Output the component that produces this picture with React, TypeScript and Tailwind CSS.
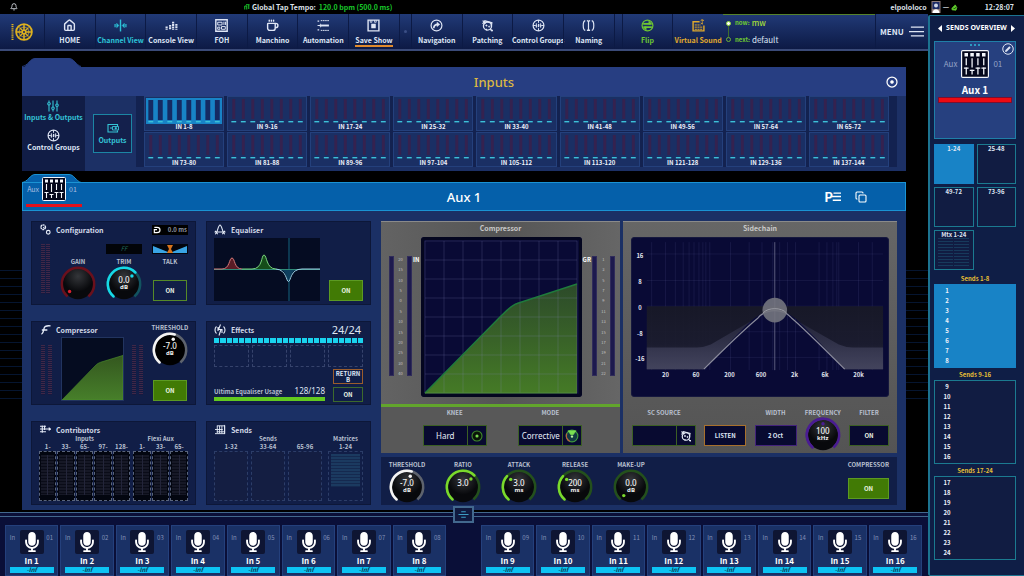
import React from "react";
import { Bell, House, Coffee, Copy } from "lucide-react";
import { FaMicrophone } from "react-icons/fa";

type IconProps = { className?: string };

function Svg({ className = "size-3", box = 24, children }: IconProps & { box?: number; children: React.ReactNode }) {
  return (
    <svg
      viewBox={`0 0 ${box} ${box}`}
      className={className}
      fill="none"
      stroke="currentColor"
      strokeWidth={2.2}
      aria-hidden="true"
    >
      {children}
    </svg>
  );
}

const HomeIcon = () => <House className="size-[13px]" strokeWidth={2.6} aria-hidden="true" />;
const ChannelIcon = () => (
  <Svg className="size-[13px]">
    <path d="M12 1v22" strokeWidth={2.6} />
    <path d="M9 12 5 8v8zM15 12l4-4v8z" fill="currentColor" strokeWidth={1} />
    <path d="M2 9v6M22 9v6" />
  </Svg>
);
const ConsoleIcon = () => (
  <Svg className="size-[13px]">
    <path d="M3 14v6M9.500 11v9M15 5v15M21 9v11" strokeWidth={4} strokeDasharray="3.4 1" />
  </Svg>
);
const FohIcon = () => (
  <Svg className="size-[13px]">
    <path d="M1.500 1.500h21v21h-21z" strokeWidth={2.6} />
    <path d="M5 6h8v5H5zM5 15h4v4H5zM12 14h7v5h-7zM16.500 5v6M19.500 5v6" strokeWidth={1.800} />
  </Svg>
);
const CupIcon = () => <Coffee className="size-[13px]" strokeWidth={2.6} aria-hidden="true" />;
const ListIcon = () => (
  <Svg className="size-[13px]">
    <path d="M1 4h3M1 12h6M1 20h3" />
    <path d="M7 3h16M7 21h16" strokeWidth={1.800} strokeDasharray="3 1" />
    <path d="M9 12h13" strokeWidth={3.5} />
    <path d="m6 9 4 3-4 3z" fill="currentColor" strokeWidth={1} />
  </Svg>
);
const SaveIcon = () => (
  <Svg className="size-[13px]">
    <path d="M2 2h20v20H2z" strokeWidth={2.6} />
    <path d="M6 2v4h3V2M14 2v4h3V2" strokeWidth={1.500} />
    <path d="M9 10h6v6H9z" fill="currentColor" />
  </Svg>
);
const NavigateIcon = () => (
  <Svg className="size-[13px]">
    <circle cx="12" cy="12" r="10" />
    <path d="M7 17c0-5 3-7 8-7" strokeWidth={3} />
    <path d="m13 6 5 4-5 4z" fill="currentColor" strokeWidth={1} />
  </Svg>
);
const PatchIcon = ({ className = "size-[13px]" }: IconProps) => (
  <Svg className={className}>
    <circle cx="12" cy="13" r="7.500" strokeWidth={2.4} />
    <path d="M3 3l6 5M3 9l4-5M21 23l-4-5M6 3l14 4-1 6" strokeWidth={2.4} />
    <circle cx="10" cy="12" r="1.300" fill="currentColor" strokeWidth={1} />
    <circle cx="15" cy="14" r="1.300" fill="currentColor" strokeWidth={1} />
    <path d="M10 18v3M18 21h4" />
  </Svg>
);
const GroupIcon = () => (
  <Svg className="size-[13px]">
    <circle cx="12" cy="12" r="10" />
    <path d="M12 2v5M2 12h5M17 12h5M12 17v5M8 8v8M12 9v6M16 8v8M7 13h3M11 11h3M14 13h3" strokeWidth={1.800} />
  </Svg>
);
const NamingIcon = () => (
  <Svg className="size-[13px]">
    <path d="M6 3C1 4 1 20 6 21M18 3c5 1 5 17 0 18M12 4v16M9 3c2 0 3 1 3 2 0-1 1-2 3-2M9 21c2 0 3-1 3-2 0 1 1 2 3 2" />
  </Svg>
);
const FlipIcon = () => (
  <Svg className="size-[13px]">
    <circle cx="12" cy="12" r="10" />
    <path d="M4 9h14M20 15H6" strokeWidth={3} />
    <path d="m15 5 4 4h-4zM9 19l-4-4h4z" fill="currentColor" />
  </Svg>
);
const VirtualIcon = () => (
  <Svg className="size-[13px]">
    <path d="M14 5H2v17h20V12" strokeWidth={2.600} />
    <path d="M19 1v9l-3-3M16 3l3-2 3 2M5 11h11M5 15h14M5 19h14" strokeWidth={1.800} strokeDasharray="4 1" />
  </Svg>
);
const FadersIcon = ({ className = "size-3" }: IconProps) => (
  <Svg className={className}>
    <path d="M4 1v4M4 10v13M12 1v13M12 19v4M20 1v7M20 13v10" />
    <circle cx="4" cy="7.500" r="2.500" />
    <circle cx="12" cy="16.500" r="2.500" />
    <circle cx="20" cy="10.500" r="2.500" />
  </Svg>
);
const OutputIcon = () => (
  <Svg className="size-3">
    <path d="M21 8V5H2v15h19v-3M6 12h5" />
    <path d="M11 9h12v7H11z" strokeWidth={1.800} />
    <path d="M16 11h3v3h-3z" fill="currentColor" strokeWidth={1} />
  </Svg>
);

function AuxIcon({ className = "size-6" }: IconProps) {
  return (
    <svg viewBox="0 0 24 24" className={className} fill="none" stroke="#f4f6fc" aria-hidden="true">
      <rect x="0.500" y="0.500" width="23" height="23" rx="1" fill="#04071c" strokeWidth="1" />
      <path d="M3 4h3M8 4h3M13 4h3M18 4h3" strokeWidth="3" />
      <path d="M4.500 7v6M9.500 7v8M14.500 7v6M19.500 7v6M4.500 15v6M9.500 17v4M14.500 15v6M19.500 15v6" strokeWidth="1.100" />
      <path d="M2.500 15.500h4M7.500 17.500h4M12.500 15.500h4M17.500 15.500h4" strokeWidth="1.100" />
    </svg>
  );
}

const NAV_A = [
  { label: "HOME", icon: <HomeIcon />, tone: "text-[#dfe6f5]", mark: false },
  { label: "Channel View", icon: <ChannelIcon />, tone: "text-[#2cc3d8]", mark: false },
  { label: "Console View", icon: <ConsoleIcon />, tone: "text-[#dfe6f5]", mark: false },
  { label: "FOH", icon: <FohIcon />, tone: "text-[#dfe6f5]", mark: false },
  { label: "Manchino", icon: <CupIcon />, tone: "text-[#dfe6f5]", mark: false },
  { label: "Automation", icon: <ListIcon />, tone: "text-[#dfe6f5]", mark: false },
  { label: "Save Show", icon: <SaveIcon />, tone: "text-[#dfe6f5]", mark: true },
];
const NAV_B = [
  { label: "Navigation", icon: <NavigateIcon />, tone: "text-[#dfe6f5]", mark: false },
  { label: "Patching", icon: <PatchIcon />, tone: "text-[#dfe6f5]", mark: false },
  { label: "Control Groups", icon: <GroupIcon />, tone: "text-[#dfe6f5]", mark: false },
  { label: "Naming", icon: <NamingIcon />, tone: "text-[#dfe6f5]", mark: false },
];
const NAV_C = [
  { label: "Flip", icon: <FlipIcon />, tone: "text-[#6fc832]", mark: false },
  { label: "Virtual Sound", icon: <VirtualIcon />, tone: "text-[#e0a92c]", mark: false },
];

function NavItem({ item }: { item: (typeof NAV_A)[number] }) {
  return (
    <button
      className={`flex flex-col items-center gap-[3px] border-l border-[#0c1a45] pt-[5px] text-[7px] leading-[10px] font-bold whitespace-nowrap ${item.tone}`}
    >
      {item.icon}
      <span className={item.mark ? "border-b-2 border-[#e08a2c]" : ""}>{item.label}</span>
    </button>
  );
}

function StatusBar() {
  return (
    <div className="flex h-[14px] items-center bg-black text-[7px] leading-[10px] font-bold text-[#dfe3ea]">
      <div className="w-[244px] pl-[10px]">
        <Bell className="size-2" strokeWidth={2.500} aria-label="Notifications" />
      </div>
      <div className="flex flex-1 items-center gap-[2px]">
        <Svg className="size-[6px] text-[#19c92a]">
          <path d="M3 22V8h8v14M8 3h14M19 3v17" strokeWidth={4} />
        </Svg>
        <span>Global Tap Tempo:</span>
        <span className="pl-px text-[#19c92a]">120.0 bpm (500.0 ms)</span>
      </div>
      <span className="pr-1">elpololoco</span>
      <svg viewBox="0 0 9 12" className="h-3 w-[10px]" aria-hidden="true">
        <rect width="9" height="12" fill="#8d7a78" />
        <rect x="1" y="1" width="7" height="7" fill="#1c2a66" />
        <circle cx="4.500" cy="4.500" r="2" fill="#cfd6e8" />
        <path d="M1 12c0-5 7-5 7 0z" fill="#fff" />
      </svg>
      <span className="px-[2px]">—</span>
      <Svg className="size-[7px] text-[#5fce2c]">
        <path d="M4 20C0 12 10 10 14 3l6 8-3 10z" fill="currentColor" strokeWidth={3} />
        <path d="m8 13 4 4 7-8" stroke="#000" />
      </Svg>
      <span className="w-[66px] pr-[10px] text-right">12:28:07</span>
    </div>
  );
}

function NavBar() {
  return (
    <nav className="grid h-[37px] grid-cols-[44px_repeat(7,minmax(0,1fr))_12px_repeat(4,minmax(0,1fr))_8px_repeat(2,minmax(0,1fr))_205px] border-b-2 border-[#3a4a78] bg-gradient-to-b from-[#213a77] to-[#0d1a45]">
      <div className="flex items-center gap-px pl-[11px] text-[#dfb21f]">
        <svg viewBox="0 0 3 18" className="h-[18px] w-[3px]" fill="none" stroke="currentColor" aria-hidden="true">
          <path d="M1.500 1v16" strokeWidth="2" strokeDasharray="1.200 0.900" />
        </svg>
        <Svg className="size-[18px]">
          <circle cx="12" cy="12" r="10.500" strokeWidth={2.400} />
          <circle cx="12" cy="12" r="2.500" />
          <path d="M12 2v7M12 15v7M2 12h7M15 12h7" strokeWidth={2} />
          <path d="m6 6 3.500 3.500M18 6l-3.500 3.500M6 18l3.500-3.500M18 18l-3.500-3.500" strokeWidth={1.500} />
          <circle cx="12" cy="12" r="6.500" strokeWidth={1} />
        </Svg>
      </div>
      {NAV_A.map((i) => <NavItem key={i.label} item={i} />)}
      <div className="grid place-items-center border-l border-[#0c1a45]">
        <i className="size-[3px] rounded-full bg-[#3b4f86]" />
      </div>
      {NAV_B.map((i) => <NavItem key={i.label} item={i} />)}
      <div className="border-l border-[#0c1a45]" />
      {NAV_C.map((i) => <NavItem key={i.label} item={i} />)}
      <div className="flex">
        <div className="flex flex-1 items-stretch gap-1 border-t border-[#56832c] pl-[3px]">
          <div className="flex flex-col items-center pt-[6px] pb-[7px]">
            <i className="size-[5px] rounded-full border border-[#8fd636] bg-white" />
            <i className="w-px flex-1 bg-[#3f6d2c]" />
            <i className="size-[5px] rounded-full border border-[#6fae36]" />
          </div>
          <div className="flex flex-col justify-between pt-[2px] pb-1 text-[8px] leading-[11px] text-[#dfe6f5]">
            <div className="flex gap-[2px]"><b className="text-[6px] text-[#6fc832]">now:</b> <span className="font-medium text-[#a5de3a]">mw</span></div>
            <div className="flex gap-[2px]"><b className="text-[6px] text-[#6fc832]">next:</b> default</div>
          </div>
        </div>
        <button className="flex w-[53px] items-center gap-[5px] border-l border-[#0c1a45] pl-1 text-[8px] font-bold text-[#dfe6f5]">
          MENU
          <Svg className="size-[15px]"><path d="M3 5h21M0 12h24M3 19h21" strokeWidth={2} /></Svg>
        </button>
      </div>
    </nav>
  );
}

const BANKS = [
  "1-8", "9-16", "17-24", "25-32", "33-40", "41-48", "49-56", "57-64", "65-72",
  "73-80", "81-88", "89-96", "97-104", "105-112", "113-120", "121-128", "129-136", "137-144",
];

function Bank({ label, active }: { label: string; active: boolean }) {
  return (
    <button className="flex h-[35px] flex-col border border-[#24407c] bg-[#1a2f64] px-px pt-px">
      <svg viewBox="0 0 78 26" preserveAspectRatio="none" className="block h-[26px] w-full" aria-hidden="true">
        {active && <path d="M0 0h78v26H0z" fill="#1883c6" />}
        {Array.from({ length: 8 }, (_, i) => {
          const x = 4.9 + i * 9.74;
          return (
            <g key={i}>
              {active ? (
                <rect x={x - 2.500} y="2" width="5" height="20" fill="#152a62" />
              ) : (
                <rect x={x - 1.500} y="1" width="3" height="20" fill="#35224f" />
              )}
              <rect x={x - 2.500} y="23" width="5" height="1.400" fill="#3cc0d8" />
            </g>
          );
        })}
      </svg>
      <span className="w-full text-center text-[6px] leading-[6px] font-bold text-[#eef2fb]">IN {label}</span>
    </button>
  );
}

function Tab({ fill, stroke, className = "" }: { fill: string; stroke: string; className?: string }) {
  return (
    <svg viewBox="0 0 60 9" className={`block h-[9px] w-[60px] ${className}`} aria-hidden="true">
      <path d="M2 9 C6 7 8 .5 13 .5H47C52 .5 54 7 59 9z" fill={fill} />
      <path d="M0 8.500C6 8 8 .5 13 .5H47C52 .5 54 7 59 8.500" fill="none" stroke={stroke} />
    </svg>
  );
}

function InputsPanel() {
  return (
    <section className="pt-[7px]">
      <Tab fill="#273e82" stroke="#273e82" />
      <header className="grid h-[29px] grid-cols-[1fr_auto_1fr] items-center bg-[#273e82]">
        <span />
        <h2 className="pl-[60px] font-['Noto_Sans',sans-serif] text-[13px] leading-[18px] font-medium text-[#dcb842]">Inputs</h2>
        <button aria-label="Inputs settings" className="justify-self-end pr-2 text-white">
          <Svg className="size-3">
            <circle cx="12" cy="12" r="10" strokeWidth={2.500} />
            <circle cx="12" cy="12" r="2.500" fill="currentColor" />
          </Svg>
        </button>
      </header>
      <div className="flex h-[75px] bg-[#1c3065]">
        <div className="flex w-[63px] flex-col items-center gap-[7px] bg-[#111d46] pt-1 text-[7px] leading-[9px] font-bold whitespace-nowrap">
          <button className="flex flex-col items-center gap-px text-[#35c4d6]">
            <FadersIcon />
            Inputs &amp; Outputs
          </button>
          <button className="flex flex-col items-center gap-px text-[#dfe6f5]">
            <GroupIcon />
            Control Groups
          </button>
        </div>
        <div className="grid w-[51px] place-items-center pl-1">
          <button className="flex h-[39px] w-[39px] flex-col items-center justify-center gap-px border border-[#1c86a4] bg-[#14204c] text-[7px] leading-[10px] font-bold text-[#35c4d6]">
            <OutputIcon />
            Outputs
          </button>
        </div>
        <div className="mr-[9px] mb-1 grid flex-1 grid-cols-9 content-start gap-x-[3px] gap-y-px bg-[#132250] pr-2 pl-2">
          {BANKS.map((b, i) => <Bank key={b} label={b} active={i === 0} />)}
        </div>
      </div>
    </section>
  );
}

function polar(deg: number, r: number) {
  const a = ((deg - 90) * Math.PI) / 180;
  return [20 + r * Math.cos(a), 20 + r * Math.sin(a)];
}
function arc(from: number, to: number, r: number) {
  const [x1, y1] = polar(from, r);
  const [x2, y2] = polar(to, r);
  return `M${x1} ${y1}A${r} ${r} 0 ${to - from > 180 ? 1 : 0} 1 ${x2} ${y2}`;
}

function Knob({ name, value, unit, level, color, track }: {
  name: string; value: string; unit: string; level: number; color: string; track: string;
}) {
  const start = -140;
  const end = 140;
  const at = start + (end - start) * level;
  const [dx, dy] = polar(at, 12.500);
  return (
    <div
      role="slider"
      aria-label={name}
      aria-valuenow={Math.round(level * 100)}
      tabIndex={0}
      className="grid size-9 place-items-center"
    >
      <svg viewBox="0 0 40 40" className="col-start-1 row-start-1 size-9" aria-hidden="true">
        <defs>
          <radialGradient id={`face-${name}`} cy="0.250">
            <stop offset="0" stopColor="#34363a" />
            <stop offset="1" stopColor="#08090c" />
          </radialGradient>
        </defs>
        <circle cx="20" cy="20" r="17" fill={`url(#face-${name})`} />
        <path d={arc(start, end, 18)} fill="none" stroke={track} strokeWidth="2.800" />
        {level > 0.1 && <path d={arc(start, at, 18)} fill="none" stroke={color} strokeWidth="2.800" strokeLinecap="round" />}
        <circle cx={dx} cy={dy} r="1.900" fill={color} />
      </svg>
      {value && (
        <div className="col-start-1 row-start-1 pb-px text-center font-['Noto_Sans',sans-serif] text-[8px] leading-[8px] font-medium text-[#f2f2f2]">
          {value}
          <div className="h-[7px] text-[6px] leading-[7px] font-bold">{unit}</div>
        </div>
      )}
    </div>
  );
}

function Label({ children }: { children: React.ReactNode }) {
  return <div className="text-center text-[6px] leading-[8px] font-bold whitespace-nowrap text-[#b9c0d0]">{children}</div>;
}

function Card({ title, icon, right, children }: {
  title: string; icon: React.ReactNode; right?: React.ReactNode; children: React.ReactNode;
}) {
  return (
    <article className="flex h-[84px] flex-col border border-[#0d1738] bg-[#111e47] px-[7px]">
      <header className="flex h-[15px] shrink-0 items-center">
        <span className="flex w-[17px] text-[#e6ecf8]">{icon}</span>
        <h3 className="flex-1 text-[7px] leading-[10px] font-bold text-[#d3d9e8]">{title}</h3>
        {right}
      </header>
      {children}
    </article>
  );
}

function DotMeter() {
  return (
    <div className="flex h-[50px] w-[11px] justify-between">
      <i className="w-1 bg-[repeating-linear-gradient(#3f2848_0_1px,#15193f_1px_2px)]" />
      <i className="w-1 bg-[repeating-linear-gradient(#3f2848_0_1px,#15193f_1px_2px)]" />
    </div>
  );
}

const OnButton = ({ className }: { className: string }) => (
  <button className={`grid place-items-center text-[6px] leading-[8px] font-bold text-[#eef5e6] ${className}`}>ON</button>
);
const SOLID = "h-[21px] w-[34px] border border-[#5c9a22] bg-[#417a05]";

function ConfigurationCard() {
  return (
    <Card
      title="Configuration"
      icon={
        <Svg className="ml-px size-[11px]">
          <circle cx="7" cy="7" r="5" strokeDasharray="4 1" strokeWidth={3} />
          <circle cx="18" cy="18" r="4" strokeWidth={2.500} />
          <path d="M7 7l3 3" />
        </Svg>
      }
      right={
        <div className="flex h-[10px] w-9 items-center justify-between bg-black px-px text-[6px] font-bold text-[#8f96a3]">
          <Svg className="size-2 text-white"><path d="M4 4h8c12 0 12 16 0 16H4v-9h8" strokeWidth={3.500} /></Svg>
          0.0 ms
        </div>
      }
    >
      <div className="flex items-start pt-[7px] pl-[2px]">
        <DotMeter />
        <div className="ml-[10px] flex w-9 flex-col pt-[14px]">
          <Label>GAIN</Label>
          <Knob name="Gain" value="" unit="" level={0.030} color="#d82030" track="#6a101c" />
        </div>
        <div className="ml-[10px] flex w-9 flex-col">
          <div className="mb-1 grid h-[10px] place-items-center bg-[#020408] text-[6px] leading-none italic text-[#1f6a5c]">FF</div>
          <Label>TRIM</Label>
          <Knob name="Trim" value="0.0" unit="dB" level={0.660} color="#16d8e6" track="#12535f" />
        </div>
        <div className="ml-[10px] flex w-9 flex-col items-center">
          <svg viewBox="0 0 36 10" className="mb-1 block h-[10px] w-9" aria-hidden="true">
            <path d="M0 0h36v10H0z" fill="#03060d" />
            <path d="M1 2 16 8v1H1zM35 2 20 8v1h15z" fill="#39a4e4" />
            <path d="M15 1h6l-2 4 2 4h-6l2-4z" fill="#d8741c" />
          </svg>
          <Label>TALK</Label>
          <OnButton className="mt-[14px] h-[21px] w-[34px] border border-[#568a28]" />
        </div>
      </div>
    </Card>
  );
}

function EqualiserCard() {
  return (
    <Card
      title="Equaliser"
      icon={<Svg className="size-3"><path d="M1 16h22M2 20c5 0 6-18 10-18s5 18 10 18M2 14c3 0 3 6 6 6M22 14c-3 0-3 6-6 6" /></Svg>}
    >
      <div className="flex flex-1 items-end justify-between pb-[3px]">
        <svg viewBox="0 0 106 63" className="h-[63px] w-[106px] bg-[#050c22]" fill="none" aria-label="Equaliser curve">
          <path d="M75 0v63" stroke="#12506a" strokeWidth="1.300" />
          <path d="M8 31C16 31 15 20 18 20S20 31 28 31z" fill="#5a1c26" />
          <path d="M38 31C49 31 47 17 50 17S52 31 62 31z" fill="#154d1a" />
          <path d="M64 31C74 32 72 43 74.500 43S75 32 86 31z" fill="#0d3f5e" />
          <path d="M0 31.500H106" stroke="#2f8a78" strokeWidth="1" />
          <path d="M0 31H8C16 31 15 20 18 20S20 31 28 31" stroke="#d77a7a" />
          <path d="M28 31H38C49 31 47 17 50 17S52 31 62 31" stroke="#7ad47e" />
          <path d="M62 31C73 32 72 43.500 74.500 43.500S76 31 88 31H106" stroke="#9cd0e4" />
        </svg>
        <OnButton className={SOLID} />
      </div>
    </Card>
  );
}

function CompressorCard() {
  return (
    <Card title="Compressor" icon={<Svg className="ml-px size-[11px]"><path d="M3 22C7 21 8 14 9 9c1-4 5-6 14-5M4 13h12" strokeWidth={3} /></Svg>}>
      <div className="flex flex-1 items-start justify-between pl-[2px]">
        <div className="pt-2"><DotMeter /></div>
        <svg viewBox="0 0 63 64" className="h-16 w-[63px] border border-[#22345f] bg-[#050c20]" aria-label="Compressor curve">
          <defs>
            <linearGradient id="mini" x2="0" y2="1">
              <stop stopColor="#34571f" />
              <stop offset="1" stopColor="#477f2a" />
            </linearGradient>
          </defs>
          <path d="M0 64 35 28Q37 26 40 25L63 18V64z" fill="url(#mini)" stroke="#4c8f2a" strokeWidth="0.700" />
        </svg>
        <div className="pt-2"><DotMeter /></div>
        <div className="-mt-[13px] flex w-9 flex-col items-center">
          <Label>THRESHOLD</Label>
          <Knob name="Threshold level" value="-7.0" unit="dB" level={0.560} color="#f4f4f4" track="#5e636d" />
          <OnButton className={`mt-3 ${SOLID}`} />
        </div>
      </div>
    </Card>
  );
}

function EffectsCard() {
  return (
    <Card
      title="Effects"
      icon={<Svg className="size-3"><path d="M5 5C1 8 1 16 5 19M19 5c4 3 4 11 0 14M13 1 9 11h5l-4 12M8 6v8M16 10v8" /></Svg>}
      right={<span className="pr-[2px] font-['Noto_Sans',sans-serif] text-[11px] leading-[12px] text-[#dfe5f2]">24/24</span>}
    >
      <div className="mt-px flex h-[5px] gap-px">
        {Array.from({ length: 24 }, (_, i) => <i key={i} className="flex-1 bg-[#19d3ee]" />)}
      </div>
      <div className="mt-[2px] flex h-[22px] justify-between">
        {[0, 1, 2, 3].map((i) => <i key={i} className="w-[35px] border border-dashed border-[#36436c]" />)}
      </div>
      <div className="mt-[2px] flex flex-1 justify-between">
        <div className="mt-4 w-[111px]">
          <div className="flex h-[12px] items-center justify-between whitespace-nowrap">
            <span className="text-[6px] font-bold text-[#b9c0d0]">Ultima Equaliser Usage</span>
            <span className="font-['Noto_Sans',sans-serif] text-[8px] text-[#dfe5f2]">128/128</span>
          </div>
          <div className="h-1 bg-[#62c91f]" />
        </div>
        <div className="flex w-[30px] flex-col gap-[3px]">
          <button className="h-[15px] border border-[#9a5c2c] text-[6px] leading-[6px] font-bold text-[#dfe6f5]">RETURN<br />B</button>
          <OnButton className="h-[15px] border border-[#3d6a2c]" />
        </div>
      </div>
    </Card>
  );
}

function Matrix({ ranges, dark }: { ranges: string[]; dark: boolean }) {
  return (
    <div className={`flex ${dark ? "gap-px" : "gap-[3px]"}`}>
      {ranges.map((r) => (
        <div key={r} className="flex-1">
          <Label>{r}</Label>
          <div
            className={`flex h-[50px] border border-dashed ${
              dark ? "border-[#59647c] bg-[#030610] p-px" : "border-[#2c3d68] bg-[#141e42]"
            }`}
          >
            {dark && (
              <>
                <i className="mt-[2px] mb-1 flex-1 border-r border-[#23253a] bg-[repeating-linear-gradient(#161826_0_2px,#0a0c18_2px_3px)]" />
                <i className="mt-[2px] mb-1 flex-1 bg-[repeating-linear-gradient(#161826_0_2px,#0a0c18_2px_3px)]" />
              </>
            )}
          </div>
        </div>
      ))}
    </div>
  );
}

function ContributorsCard() {
  return (
    <Card title="Contributors" icon={<Svg className="ml-px size-[11px]"><path d="M0 5h13M0 11h23M0 17h13M5 3v16M10 3v10M19 8l4 3-4 3" strokeWidth={2.400} /></Svg>}>
      <div className="-mt-[2px] flex gap-[3px]">
        <div className="flex-[5]"><Label>Inputs</Label><Matrix dark ranges={["1-", "33-", "65-", "97-", "128-"]} /></div>
        <div className="flex-[3]"><Label>Flexi Aux</Label><Matrix dark ranges={["1-", "33-", "65-"]} /></div>
      </div>
    </Card>
  );
}

function SendsCard() {
  return (
    <Card title="Sends" icon={<Svg className="ml-px size-[11px]"><path d="M0 12h17M4 4h17v17H0M21 2v20M4 17h17M5 4v16M10 4v16M15 4v16" strokeWidth={2} /></Svg>}>
      <div className="-mt-[2px] flex gap-[6px]">
        <div className="flex-[108]"><Label>Sends</Label><Matrix dark={false} ranges={["1-32", "33-64", "65-96"]} /></div>
        <div className="flex-[35]">
          <Label>Matrices</Label>
          <Label>1-24</Label>
          <div className="h-[50px] border border-dashed border-[#2c3d68] p-[2px]">
            <div className="h-[33px] bg-[repeating-linear-gradient(#1b3a60_0_2px,#15294f_2px_3px)]" />
          </div>
        </div>
      </div>
    </Card>
  );
}

function Meter({ marks }: { marks: string[] }) {
  return (
    <div className="flex h-[120px] w-[23px] justify-between">
      <i className="w-[5px] border border-[#302c5a] bg-[#1d1a4e]" />
      <div className="flex flex-col justify-between text-center text-[4px] leading-[6px] text-[#c3c3c3]">
        {marks.map((m, i) => <span key={i}>{m}</span>)}
      </div>
      <i className="w-[5px] border border-[#302c5a] bg-[#1d1a4e]" />
    </div>
  );
}

const GRID_LINES = [4, 23, 42, 61, 80, 99, 118, 137, 156];

function SelectBox({ label, text, children }: { label: string; text: string; children: React.ReactNode }) {
  return (
    <div className="flex flex-col items-center gap-2">
      <Label>{label}</Label>
      <button aria-label={`${label} ${text}`} className="flex h-[21px] w-16 border border-[#3c5f24] bg-[#080a30] font-['Noto_Sans',sans-serif] text-[8px] text-[#e6ecf8]">
        <span className="grid h-full flex-1 place-items-center">{text}</span>
        <span className="grid h-full w-[19px] place-items-center border-l border-[#3c5f24]">{children}</span>
      </button>
    </div>
  );
}

function CompressorGraph() {
  return (
    <div className="flex w-[239px] flex-col">
      <div className="flex h-[183px] flex-col items-center border-t border-[#8a8a8a] bg-gradient-to-r from-[#636363] via-[#555] to-[#666]">
        <h3 className="h-[15px] pt-px text-[7px] leading-[10px] font-bold text-[#c8c8c8]">Compressor</h3>
        <div className="flex w-full justify-between pr-[5px] pl-2">
          <div className="flex gap-px pt-[19px]">
            <Meter marks={["20", "15", "10", "5", "0", "5", "10", "15", "20", "25", "30", "40"]} />
            <span className="text-[6px] leading-[8px] font-bold text-white">IN</span>
          </div>
          <svg viewBox="0 0 161 160" className="h-40 w-[161px] rounded-[3px] bg-[#090a35]" fill="none" aria-label="Compression curve">
            <defs>
              <linearGradient id="comp" x2="0" y2="1">
                <stop stopColor="#2c4a2a" />
                <stop offset="1" stopColor="#457a26" />
              </linearGradient>
            </defs>
            <rect x="1.500" y="1.500" width="158" height="157" rx="2" stroke="#04061f" strokeWidth="3" />
            <path d="M4 156 80 79Q91 68 96 66.500L156 47V156z" fill="url(#comp)" />
            {GRID_LINES.map((p) => (
              <path key={p} d={`M${p} 4V156M4 ${p}H156`} stroke="#8a90c8" strokeOpacity="0.200" />
            ))}
            <path d="M4 156 80 79Q91 68 96 66.500L156 47" stroke="#1f7a3c" strokeWidth="1.500" />
            <path d="M4 156H156" stroke="#4b8a2c" />
          </svg>
          <div className="flex gap-px pt-[19px]">
            <span className="text-[6px] leading-[8px] font-bold text-white">GR</span>
            <Meter marks={["1", "3", "5", "7", "9", "11", "13", "15", "17", "19", "21", "22"]} />
          </div>
        </div>
      </div>
      <div className="grid flex-1 grid-cols-[26px_1fr_1fr_22px] border-t-[3px] border-[#62a52c] bg-[#585858] pt-[2px]">
        <span />
        <SelectBox label="KNEE" text="Hard">
          <Svg className="size-3 text-[#3f8a2c]">
            <circle cx="12" cy="12" r="10" fill="#0a1408" />
            <circle cx="12" cy="12" r="2" fill="#7ae052" stroke="#7ae052" />
          </Svg>
        </SelectBox>
        <SelectBox label="MODE" text="Corrective">
          <Svg className="size-[14px] text-[#3f9a3c]">
            <circle cx="12" cy="12" r="10" fill="#123a44" strokeWidth={2} />
            <path d="M5 3h14l-5 7h-4z" fill="#7ae052" stroke="#7ae052" strokeWidth={1} />
            <path d="M3 8c-2 6 1 11 5 13" stroke="#c05a3c" />
            <circle cx="12" cy="13" r="2" fill="#b9f0a0" stroke="none" />
          </Svg>
        </SelectBox>
      </div>
    </div>
  );
}

const FREQ_LINES = [20, 34, 44, 52, 58, 63, 68, 72, 75, 79, 100, 119, 132, 143, 145, 150, 158, 166, 190, 198, 204, 208, 210, 230, 244];
const DB = [["16", 19], ["8", 46], ["0", 72], ["-8", 98], ["-16", 124]] as const;
const HZ = [["20", 34], ["60", 65], ["200", 99], ["600", 131], ["2k", 165], ["6k", 196], ["20k", 230]] as const;

function SidechainPanel() {
  return (
    <div className="flex flex-1 flex-col border-t border-[#8a8a8a] bg-gradient-to-b from-[#666] to-[#545454] px-2">
      <h3 className="h-[15px] pt-px text-center text-[7px] leading-[10px] font-bold text-[#c8c8c8]">Sidechain</h3>
      <svg viewBox="0 0 260 160" className="h-40 w-full rounded-[3px] border border-[#16183e] bg-[#090a35]" fill="none" aria-label="Sidechain filter response">
        <defs>
          <linearGradient id="shade" x2="0" y2="1">
            <stop stopColor="#181926" />
            <stop offset="0.600" stopColor="#1c1d2e" />
            <stop offset="1" stopColor="#303146" />
          </linearGradient>
          <linearGradient id="edge" x2="0" y2="1">
            <stop stopColor="#30314a" stopOpacity="0.500" />
            <stop offset="1" stopColor="#42435c" />
          </linearGradient>
        </defs>
        {FREQ_LINES.map((x) => <path key={x} d={`M${x} 4V134`} stroke="#8a90d8" strokeOpacity="0.110" />)}
        {DB.map(([t, y]) => <path key={t} d={`M15 ${y - 3}H255`} stroke="#8a90d8" strokeOpacity="0.100" />)}
        <path d="M15 69H255V133H216C190 108 168 73 145 73S100 108 73 133H15z" fill="url(#shade)" fillOpacity="0.920" />
        <path d="M73 133C92 114 108 96 121 84L80 108Q73 111 66 111H15V133zM216 133C200 116 182 96 168 84L210 108Q217 111 224 111H255V133z" fill="url(#edge)" />
        <path d="M145 4V134" stroke="#747690" strokeOpacity="0.700" />
        <path d="M73 133C92 114 116 91 128 81 136 71 154 71 162 81 174 91 197 114 216 133" stroke="#8b8c9c" strokeWidth="1.200" />
        <circle cx="145" cy="73" r="12.500" fill="#73747e" fillOpacity="0.900" />
        <path d="M133 76C138 70 152 70 157 76" stroke="#9a9ba4" />
        <g fill="#e0e3ee" fontSize="6" fontWeight="700" textAnchor="middle">
          {DB.map(([t, y]) => <text key={t} x="8" y={y + 1}>{t}</text>)}
          {HZ.map(([t, x]) => <text key={t} x={x} y="141">{t}</text>)}
        </g>
      </svg>
      <div className="flex justify-between pt-3 pl-px">
        <SelectBox label="SC SOURCE" text=""><PatchIcon className="size-3" /></SelectBox>
        <button className="mt-4 h-[21px] w-[42px] border border-[#a8702c] bg-[#080a30] text-[6px] font-bold text-[#dfe6f5]">LISTEN</button>
        <div className="flex flex-col items-center gap-2">
          <Label>WIDTH</Label>
          <button className="h-[21px] w-[42px] border border-[#43237c] bg-[#080a30] text-[6px] font-bold text-[#dfe6f5]">2 Oct</button>
        </div>
        <div className="flex w-9 flex-col items-center">
          <Label>FREQUENCY</Label>
          <Knob name="Frequency" value="100" unit="kHz" level={0.500} color="#4a1c92" track="#4a1c92" />
        </div>
        <div className="flex flex-col items-center gap-2">
          <Label>FILTER</Label>
          <OnButton className="h-[21px] w-10 border border-[#3c5f24] bg-[#080a30]" />
        </div>
      </div>
    </div>
  );
}

const KNOBS = [
  { name: "THRESHOLD", value: "-7.0", unit: "dB", level: 0.560, color: "#f4f4f4", track: "#5e636d" },
  { name: "RATIO", value: "3.0", unit: "", level: 0.660, color: "#7ad92c", track: "#24501c" },
  { name: "ATTACK", value: "3.0", unit: "ms", level: 0.330, color: "#7ad92c", track: "#24501c" },
  { name: "RELEASE", value: "200", unit: "ms", level: 0.330, color: "#7ad92c", track: "#24501c" },
  { name: "MAKE-UP", value: "0.0", unit: "dB", level: 0, color: "#7ad92c", track: "#24501c" },
];

function AuxPanel() {
  return (
    <section className="pt-[3px]">
      <header className="grid h-[37px] grid-cols-[1fr_auto_1fr]">
        <div className="flex flex-col">
          <Tab fill="#0560aa" stroke="#1a93d4" />
          <div className="-mt-px flex-1 border border-r-0 border-[#1a93d4] bg-[#0560aa]">
            <div className="-mt-[6px] flex w-[59px] flex-col gap-[3px] pl-[3px]">
              <div className="flex items-center justify-center gap-[3px] pr-1 text-[7px] text-[#a9bfe0]">
                Aux <AuxIcon className="size-6" /> 01
              </div>
              <div className="h-[3px] bg-[#e3101c]" />
            </div>
          </div>
        </div>
        <h2 className="mt-2 grid place-items-center border-y border-[#1a93d4] bg-[#0560aa] font-['Noto_Sans',sans-serif] text-[13px] leading-[18px] font-medium text-white">Aux 1</h2>
        <div className="mt-2 flex items-center justify-end gap-[14px] border border-l-0 border-[#1a93d4] bg-[#0560aa] pr-[38px] text-white">
          <button aria-label="Presets" className="flex items-center text-[13px] leading-none font-bold">
            P
            <Svg className="-ml-px size-[9px]"><path d="M4 3h20M0 12h24M2 22h22" strokeWidth={3.500} /></Svg>
          </button>
          <button aria-label="Copy"><Copy className="size-3" strokeWidth={2.200} /></button>
        </div>
      </header>
      <div className="flex gap-[10px] bg-[#1b3065] px-[9px] pt-[10px] pb-[5px]">
        <div className="grid w-[340px] grid-cols-2 gap-x-[10px] gap-y-4">
          <ConfigurationCard />
          <EqualiserCard />
          <CompressorCard />
          <EffectsCard />
          <ContributorsCard />
          <SendsCard />
        </div>
        <div className="flex flex-1 flex-col gap-1">
          <div className="flex h-[232px] gap-[3px]">
            <CompressorGraph />
            <SidechainPanel />
          </div>
          <div className="flex h-12 justify-between bg-[#111e47] pt-1 pr-2 pl-2">
            <div className="flex gap-5">
              {KNOBS.map((k) => (
                <div key={k.name} className="flex w-9 flex-col items-center">
                  <Label>{k.name}</Label>
                  <Knob {...k} />
                </div>
              ))}
            </div>
            <div className="flex flex-col items-end gap-[9px]">
              <Label>COMPRESSOR</Label>
              <OnButton className="h-[21px] w-[41px] border border-[#5c9a22] bg-[#417a05]" />
            </div>
          </div>
        </div>
      </div>
    </section>
  );
}

function Channel({ n }: { n: number }) {
  return (
    <button className="flex min-w-0 flex-1 flex-col items-center border border-[#24407c] bg-[#1a3166] pt-1">
      <span className="flex items-start gap-[2px] text-[6px] leading-[16px] text-[#8492b8]">
        <span className="w-2 text-left">In</span>
        <span className="grid size-6 place-items-center rounded-[2px] bg-[#0e1533] text-white">
          <FaMicrophone className="size-5" />
        </span>
        <span className="w-2">{String(n).padStart(2, "0")}</span>
      </span>
      <span className="mt-[2px] text-[8px] leading-[10px] font-bold text-white">In {n}</span>
      <span className="mt-px h-[6px] w-[44px] bg-[#0cc4f4] text-[6px] leading-[6px] font-bold italic text-[#063a52]">-Inf</span>
    </button>
  );
}

function ChannelStrip() {
  return (
    <footer className="relative mt-[2px] flex-1 bg-[#0a0f38]">
      <div className="h-[5px] border-y border-[#42688e]" />
      <button
        aria-label="Expand channels"
        className="absolute -top-[6px] left-1/2 -ml-[11px] grid h-[17px] w-[21px] place-items-center border-2 border-[#42688e] bg-[#10193f] text-[#3c9cc4]"
      >
        <Svg className="size-[11px]"><path d="M7 6h10M1 12h22M7 18h10" /></Svg>
      </button>
      <div className="mt-2 flex h-[51px] gap-[35px] pr-[6px] pl-[5px]">
        {[1, 9].map((first) => (
          <div key={first} className="flex min-w-0 flex-1 gap-[2px]">
            {Array.from({ length: 8 }, (_, i) => <Channel key={i} n={first + i} />)}
          </div>
        ))}
      </div>
    </footer>
  );
}

function SendList({ title, first, active }: { title: string; first: number; active: boolean }) {
  return (
    <section>
      <h4 className="pt-[2px] text-center text-[6px] leading-[10px] font-bold text-[#e6bf35]">{title}</h4>
      <ol className={`h-[84px] border pt-px text-[6px] leading-[10px] font-bold text-[#eef2fb] ${active ? "border-[#1883c6] bg-[#1883c6]" : "border-[#1b7a90] bg-[#111c42]"}`}>
        {Array.from({ length: 8 }, (_, i) => <li key={i} className="w-6 text-center">{first + i}</li>)}
      </ol>
    </section>
  );
}

function SendsOverview() {
  const cell = "h-10 border text-center text-[6px] leading-[7px] font-bold text-[#dfe5f2]";
  return (
    <aside className="mt-px flex w-[96px] shrink-0 flex-col rounded-l-[2px] border-y border-l-2 border-[#1c7390] bg-[#0f1e46] pr-2 pl-1">
      <header className="-mr-2 -ml-1 flex h-[25px] items-center justify-center gap-1 pr-px font-['Noto_Sans',sans-serif] text-[7px] font-bold whitespace-nowrap text-white">
        <button aria-label="Previous"><svg viewBox="0 0 4 7" className="h-[7px] w-1" fill="#fff"><path d="M4 0v7L0 3.500z" /></svg></button>
        <h2>SENDS OVERVIEW</h2>
        <button aria-label="Next"><svg viewBox="0 0 4 7" className="h-[7px] w-1" fill="#fff"><path d="M0 0v7l4-3.500z" /></svg></button>
      </header>
      <div className="relative flex h-[98px] flex-col items-center border border-[#1f7fa8] bg-[#26407f] pt-[2px]">
        <div className="flex gap-[2px]">
          {[0, 1, 2].map((i) => <i key={i} className="size-[2px] rounded-full bg-[#2fb8d8]" />)}
        </div>
        <button aria-label="Edit" className="absolute top-px right-px text-[#dfe5f2]">
          <Svg className="size-3"><circle cx="12" cy="12" r="10.500" strokeWidth={2} /><path d="m8 16 8-8" strokeWidth={4} /><path d="m6 18 1-4 3 3z" fill="currentColor" strokeWidth={0} /></Svg>
        </button>
        <div className="mt-1 flex items-center gap-1 pr-1 text-[8px] text-[#93a2c6]">
          Aux <AuxIcon className="size-7" /> 01
        </div>
        <div className="mt-[6px] text-[10px] leading-[12px] font-bold text-white">Aux 1</div>
        <div className="mt-px h-[6px] w-[74px] border border-[#7a1030] bg-[#ee0a12]" />
      </div>
      <div className="mt-[5px] grid grid-cols-2 gap-x-[3px] gap-y-[3px]">
        <button className={`${cell} flex justify-center border-[#1883c6] bg-[#1883c6]`}>1-24</button>
        <button className={`${cell} flex justify-center border-[#1b7a90] bg-[#111c42]`}>25-48</button>
        <button className={`${cell} flex justify-center border-[#1b7a90] bg-[#111c42]`}>49-72</button>
        <button className={`${cell} flex justify-center border-[#1b7a90] bg-[#111c42]`}>73-96</button>
        <button className={`${cell} flex flex-col items-center border-[#1b7a90] bg-[#111c42]`}>
          Mtx 1-24
          <span className="flex gap-px">
            <i className="h-7 w-[15px] bg-[repeating-linear-gradient(#173a5c_0_1px,#111c42_1px_3px)]" />
            <i className="h-7 w-[15px] bg-[repeating-linear-gradient(#173a5c_0_1px,#111c42_1px_3px)]" />
          </span>
        </button>
      </div>
      <div className="mt-[2px]">
        <SendList title="Sends 1-8" first={1} active />
        <SendList title="Sends 9-16" first={9} active={false} />
        <SendList title="Sends 17-24" first={17} active={false} />
      </div>
    </aside>
  );
}

const STRIPES = "bg-[repeating-linear-gradient(#051530_0_1px,transparent_1px_8px)]";

export default function App() {
  return (
    <div className="flex min-h-screen flex-col bg-black font-['Noto_Sans_CJK_SC','Noto_Sans',sans-serif]">
      <StatusBar />
      <div className="flex flex-1">
        <div className="flex min-w-0 flex-1 flex-col">
          <NavBar />
          <main className="flex">
            <div className="flex w-[22px] items-end pb-[110px]"><i className={`h-[130px] w-full ${STRIPES}`} /></div>
            <div className="min-w-0 flex-1">
              <InputsPanel />
              <AuxPanel />
            </div>
            <div className="flex w-[22px] items-end pb-[110px]"><i className={`h-[130px] w-full ${STRIPES}`} /></div>
          </main>
          <ChannelStrip />
        </div>
        <SendsOverview />
      </div>
    </div>
  );
}
